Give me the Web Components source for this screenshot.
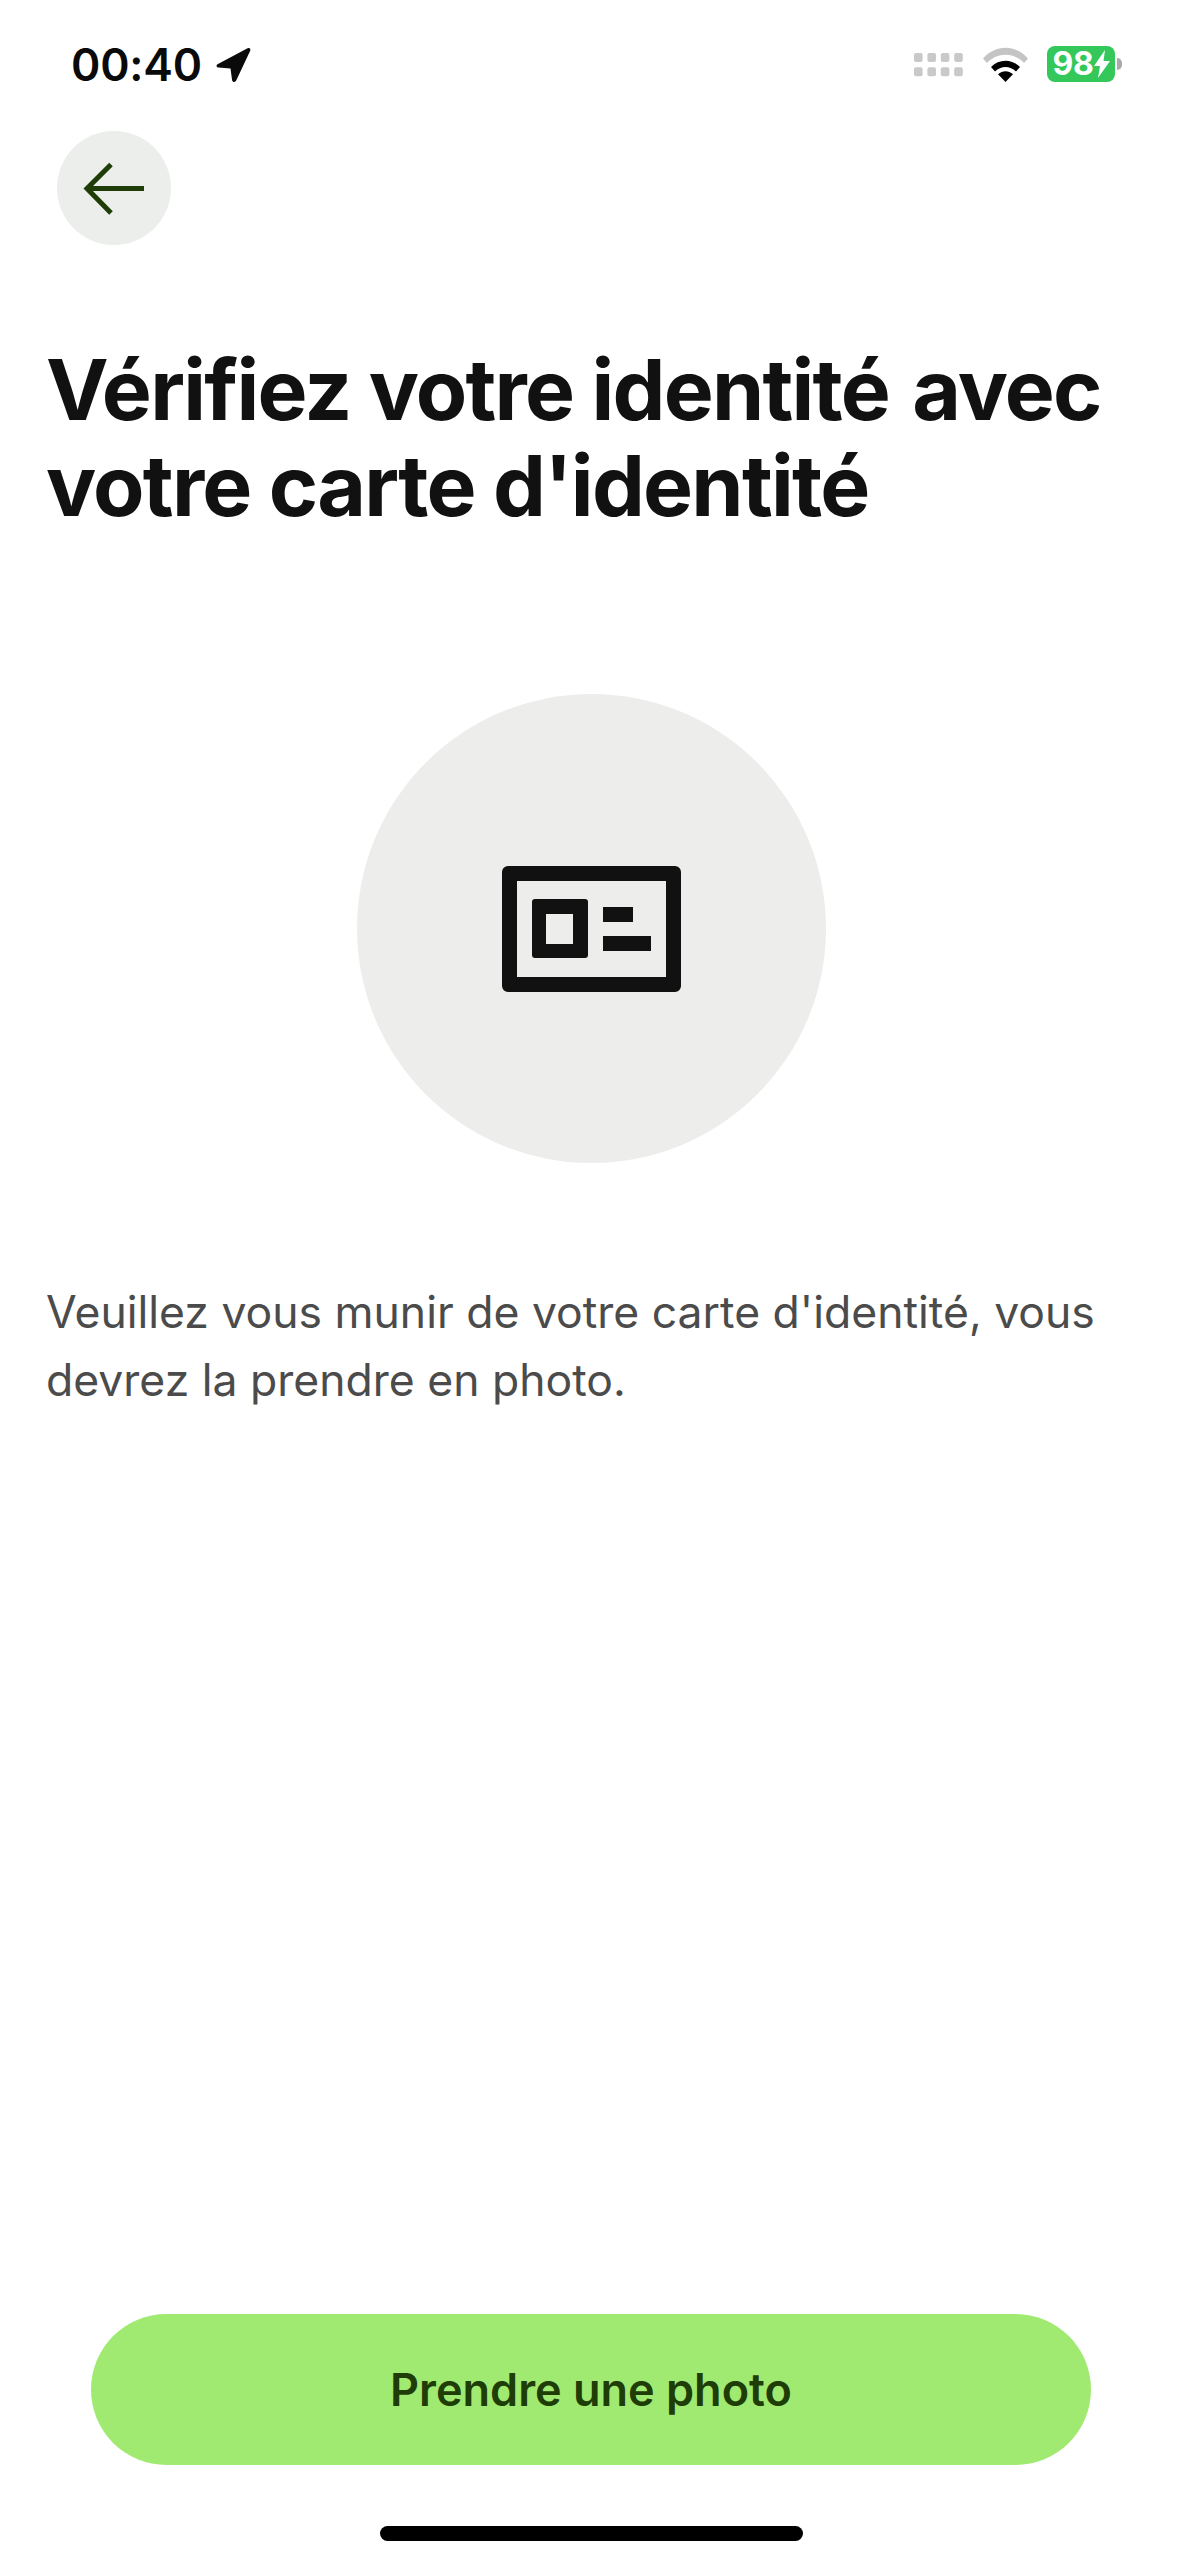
<!DOCTYPE html>
<html lang="fr"><head><meta charset="utf-8"><title>Vérifiez votre identité</title>
<style>html,body{margin:0;padding:0;background:#fff}.gap{margin-left:5px}</style></head>
<body>
<id-screen>
  <status-bar slot="top" time="00:40" level="98"></status-bar>
  <back-button slot="top"></back-button>
  <screen-title slot="top">Vérifiez votre identité <span class="gap">avec</span><br>votre carte d'identité</screen-title>
  <icon-disc slot="top"></icon-disc>
  <body-text slot="top">Veuillez vous munir de votre carte d'identité, vous<br>devrez la prendre en photo.</body-text>
  <primary-button slot="bottom">Prendre une photo</primary-button>
  <home-bar slot="bottom"></home-bar>
</id-screen>
<script>
function def(name, html){
  customElements.define(name, class extends HTMLElement{
    constructor(){super();this.attachShadow({mode:'open'}).innerHTML=html;}
  });
}
def('id-screen',`<style>:host{display:flex;flex-direction:column;justify-content:space-between;width:1183px;height:2560px;background:#fff;overflow:hidden;font-family:Inter,"Liberation Sans",sans-serif}
.t,.b{display:flex;flex-direction:column}</style><div class="t"><slot name="top"></slot></div><div class="b"><slot name="bottom"></slot></div>`);
customElements.define('status-bar',class extends HTMLElement{
  connectedCallback(){
    const time=this.getAttribute('time'),lv=this.getAttribute('level');
    const dots=[];for(let r=0;r<2;r++)for(let c=0;c<4;c++)dots.push(`<rect x="${c*13.4}" y="${r*14.3}" width="8.6" height="9" rx="2"/>`);
    this.attachShadow({mode:'open'}).innerHTML=`<style>
:host{display:flex;align-items:flex-start;height:131px;box-sizing:border-box;padding:0 61px 0 71px;font-family:Inter,"Liberation Sans",sans-serif}
.l{display:flex;align-items:center;gap:13px;margin-top:41px}
.time{font-size:44.5px;line-height:48px;font-weight:600;color:#0a0a0a;letter-spacing:-.2px}
.r{margin-left:auto;display:flex;align-items:center;margin-top:46px}
.sig{display:block;margin-right:20px;margin-top:2px}.wifi{display:block;margin-right:19px;margin-top:1px}
.bat{display:flex;align-items:center;justify-content:center;width:68px;height:36px;border-radius:8px;background:#34c759;color:#fff;font-size:32px;font-weight:700;line-height:36px;letter-spacing:-.3px}
.nub{width:5px;height:12px;margin-left:2px;border-radius:0 6px 6px 0;background:#a9a9a9}
</style>
<div class="l"><span class="time">${time}</span>
<svg width="36" height="36" viewBox="0 0 36 36"><path d="M2.5 17.2 32.600 1.300c1.800-.9 3.400.7 2.600 2.400L21.200 33.600c-1 2.100-3.700 1.700-4.100-.4l-1.600-11.600-12-1.100c-2-.2-2.600-2.400-1-3.300z" fill="#0a0a0a"/></svg></div>
<div class="r">
<svg class="sig" width="49" height="24" viewBox="0 0 49 24" fill="#c9c9c9">${dots.join('')}</svg>
<svg class="wifi" width="45" height="35" viewBox="0 0 45 35"><path d="M0 11.500C12.500 -3 32.500 -3 45 11.500L41 16C31 5 14 5 4 16z" fill="#c4c4c4"/><path d="M8 20C16 11.500 29 11.500 37 20L33 24.500C27 18.500 18 18.500 12 24.500z" fill="#000"/><path d="M15 27.200C19.500 23.300 25.500 23.300 30 27.200L22.500 35z" fill="#000"/></svg>
<div class="bat"><span>${lv}</span><svg width="16" height="28" viewBox="0 0 16 28"><path d="M11 0 0 16h6l-2 12 12-17H9.500z" fill="#fff"/></svg></div><div class="nub"></div>
</div>`;
  }
});
def('back-button',`<style>:host{display:flex;align-items:center;justify-content:center;width:114px;height:114px;margin-left:57px;border-radius:50%;background:#ebeeea}svg{display:block}</style>
<svg width="114" height="114" viewBox="0 0 114 114" fill="none" stroke="#1f3d06" stroke-width="5"><path d="M87 57.500H31"/><path d="M54 33.500 30 57.500 54 82"/></svg>`);
def('screen-title',`<style>:host{display:block;margin:97px 0 0 46px;font-size:84px;line-height:96px;font-weight:700;color:#111;letter-spacing:-1.75px;white-space:nowrap}</style><slot></slot>`);
def('icon-disc',`<style>:host{display:flex;align-items:center;justify-content:center;width:469px;height:469px;margin:160px 0 0 357px;border-radius:50%;background:#ededec}svg{display:block}</style>
<svg width="179" height="126" viewBox="0 0 179 126"><path fill="#111" fill-rule="evenodd" d="M6 0H173a6 6 0 0 1 6 6V120a6 6 0 0 1-6 6H6a6 6 0 0 1-6-6V6a6 6 0 0 1 6-6zM15 15V111H164V15zM33 33H83a3 3 0 0 1 3 3V89a3 3 0 0 1-3 3H33a3 3 0 0 1-3-3V36a3 3 0 0 1 3-3zM44 48V78H71V48z"/><rect x="101" y="41" width="30" height="15" fill="#111"/><rect x="101" y="70" width="48" height="15" fill="#111"/></svg>`);
def('body-text',`<style>:host{display:block;margin:115px 0 0 46px;font-size:44.5px;line-height:68px;font-weight:400;color:#4b4b4b;white-space:nowrap}</style><slot></slot>`);
def('primary-button',`<style>:host{display:flex;align-items:center;justify-content:center;width:1000px;height:151px;margin-left:91px;border-radius:76px;background:#a0ea72;color:#1f3d06;font-size:45px;font-weight:600}</style><slot></slot>`);
def('home-bar',`<style>:host{display:block;width:423px;height:15px;margin:61px 0 19px 380px;border-radius:8px;background:#000}</style>`);
</script>
</body></html>
